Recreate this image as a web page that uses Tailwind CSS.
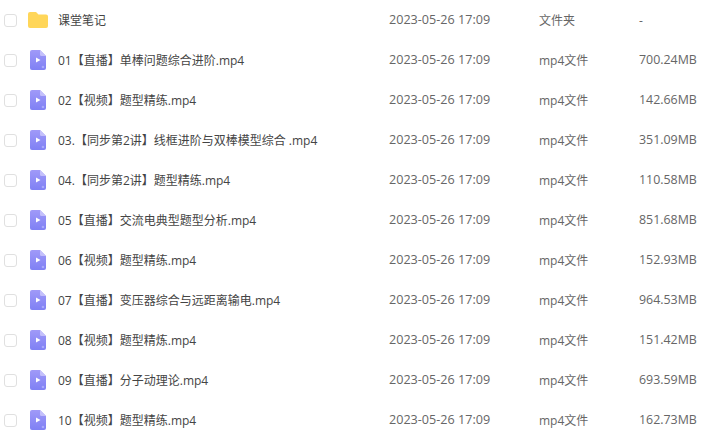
<!DOCTYPE html>
<html><head><meta charset="utf-8"><script src="https://cdn.jsdelivr.net/npm/@tailwindcss/browser@4"></script></head>
<body class="bg-white overflow-hidden font-['Open_Sans','Noto_Sans_CJK_SC',sans-serif] text-xs">
<svg class="absolute w-0 h-0" width="0" height="0"><defs><linearGradient id="g" x1="0" y1="0" x2="0" y2="1"><stop offset="0" stop-color="#a09af8"/><stop offset="1" stop-color="#7f80f4"/></linearGradient></defs></svg>
<div class="w-[712px] h-[436px] overflow-hidden">
<div class="flex items-center h-10 text-[#666]"><span class="ml-1 w-[13px] h-[13px] rounded-[3px] border border-[#e0e0e0] bg-white shrink-0"></span>
<svg class="ml-[11px] w-5 h-4 shrink-0" viewBox="0 0 20 16"><path d="M0 2a2 2 0 0 1 2-2h5c1 0 1.500.4 2 1l1.500 1.500H18a2 2 0 0 1 2 2V14a2 2 0 0 1-2 2H2a2 2 0 0 1-2-2z" fill="#ffd659"/></svg>
<span class="ml-[10px] w-[331px] text-[#444] pt-px">课堂笔记</span><span class="w-[150px] text-[12.6px] pt-px">2023-05-26 17:09</span><span class="w-[100px] pt-px">文件夹</span><span class="pt-px">-</span></div>
<div class="flex items-center h-10 text-[#666]"><span class="ml-1 w-[13px] h-[13px] rounded-[3px] border border-[#e0e0e0] bg-white shrink-0"></span>
<svg class="ml-[13px] w-4 h-5 shrink-0" viewBox="0 0 16 20"><path d="M2 0h8l6 6v12a2 2 0 0 1-2 2H2a2 2 0 0 1-2-2V2a2 2 0 0 1 2-2z" fill="url(#g)"/><path d="M10 0l6 6h-4.500A1.500 1.500 0 0 1 10 4.500z" fill="#c4c0fb"/><circle cx="13" cy="17" r="1.300" fill="#a9a9fa"/><path d="M6 7.500l4.500 2.500-4.500 2.500z" fill="#fff"/></svg>
<span class="ml-3 w-[331px] text-[#444] pt-px">01【直播】单棒问题综合进阶.mp4</span><span class="w-[150px] text-[12.6px] pt-px">2023-05-26 17:09</span><span class="w-[100px] pt-px">mp4文件</span><span class="text-[12.4px] pt-px">700.24MB</span></div>
<div class="flex items-center h-10 text-[#666]"><span class="ml-1 w-[13px] h-[13px] rounded-[3px] border border-[#e0e0e0] bg-white shrink-0"></span>
<svg class="ml-[13px] w-4 h-5 shrink-0" viewBox="0 0 16 20"><path d="M2 0h8l6 6v12a2 2 0 0 1-2 2H2a2 2 0 0 1-2-2V2a2 2 0 0 1 2-2z" fill="url(#g)"/><path d="M10 0l6 6h-4.500A1.500 1.500 0 0 1 10 4.500z" fill="#c4c0fb"/><circle cx="13" cy="17" r="1.300" fill="#a9a9fa"/><path d="M6 7.500l4.500 2.500-4.500 2.500z" fill="#fff"/></svg>
<span class="ml-3 w-[331px] text-[#444] pt-px">02【视频】题型精练.mp4</span><span class="w-[150px] text-[12.6px] pt-px">2023-05-26 17:09</span><span class="w-[100px] pt-px">mp4文件</span><span class="text-[12.4px] pt-px">142.66MB</span></div>
<div class="flex items-center h-10 text-[#666]"><span class="ml-1 w-[13px] h-[13px] rounded-[3px] border border-[#e0e0e0] bg-white shrink-0"></span>
<svg class="ml-[13px] w-4 h-5 shrink-0" viewBox="0 0 16 20"><path d="M2 0h8l6 6v12a2 2 0 0 1-2 2H2a2 2 0 0 1-2-2V2a2 2 0 0 1 2-2z" fill="url(#g)"/><path d="M10 0l6 6h-4.500A1.500 1.500 0 0 1 10 4.500z" fill="#c4c0fb"/><circle cx="13" cy="17" r="1.300" fill="#a9a9fa"/><path d="M6 7.500l4.500 2.500-4.500 2.500z" fill="#fff"/></svg>
<span class="ml-3 w-[331px] text-[#444] pt-px">03.【同步第2讲】线框进阶与双棒模型综合 .mp4</span><span class="w-[150px] text-[12.6px] pt-px">2023-05-26 17:09</span><span class="w-[100px] pt-px">mp4文件</span><span class="text-[12.4px] pt-px">351.09MB</span></div>
<div class="flex items-center h-10 text-[#666]"><span class="ml-1 w-[13px] h-[13px] rounded-[3px] border border-[#e0e0e0] bg-white shrink-0"></span>
<svg class="ml-[13px] w-4 h-5 shrink-0" viewBox="0 0 16 20"><path d="M2 0h8l6 6v12a2 2 0 0 1-2 2H2a2 2 0 0 1-2-2V2a2 2 0 0 1 2-2z" fill="url(#g)"/><path d="M10 0l6 6h-4.500A1.500 1.500 0 0 1 10 4.500z" fill="#c4c0fb"/><circle cx="13" cy="17" r="1.300" fill="#a9a9fa"/><path d="M6 7.500l4.500 2.500-4.500 2.500z" fill="#fff"/></svg>
<span class="ml-3 w-[331px] text-[#444] pt-px">04.【同步第2讲】题型精练.mp4</span><span class="w-[150px] text-[12.6px] pt-px">2023-05-26 17:09</span><span class="w-[100px] pt-px">mp4文件</span><span class="text-[12.4px] pt-px">110.58MB</span></div>
<div class="flex items-center h-10 text-[#666]"><span class="ml-1 w-[13px] h-[13px] rounded-[3px] border border-[#e0e0e0] bg-white shrink-0"></span>
<svg class="ml-[13px] w-4 h-5 shrink-0" viewBox="0 0 16 20"><path d="M2 0h8l6 6v12a2 2 0 0 1-2 2H2a2 2 0 0 1-2-2V2a2 2 0 0 1 2-2z" fill="url(#g)"/><path d="M10 0l6 6h-4.500A1.500 1.500 0 0 1 10 4.500z" fill="#c4c0fb"/><circle cx="13" cy="17" r="1.300" fill="#a9a9fa"/><path d="M6 7.500l4.500 2.500-4.500 2.500z" fill="#fff"/></svg>
<span class="ml-3 w-[331px] text-[#444] pt-px">05【直播】交流电典型题型分析.mp4</span><span class="w-[150px] text-[12.6px] pt-px">2023-05-26 17:09</span><span class="w-[100px] pt-px">mp4文件</span><span class="text-[12.4px] pt-px">851.68MB</span></div>
<div class="flex items-center h-10 text-[#666]"><span class="ml-1 w-[13px] h-[13px] rounded-[3px] border border-[#e0e0e0] bg-white shrink-0"></span>
<svg class="ml-[13px] w-4 h-5 shrink-0" viewBox="0 0 16 20"><path d="M2 0h8l6 6v12a2 2 0 0 1-2 2H2a2 2 0 0 1-2-2V2a2 2 0 0 1 2-2z" fill="url(#g)"/><path d="M10 0l6 6h-4.500A1.500 1.500 0 0 1 10 4.500z" fill="#c4c0fb"/><circle cx="13" cy="17" r="1.300" fill="#a9a9fa"/><path d="M6 7.500l4.500 2.500-4.500 2.500z" fill="#fff"/></svg>
<span class="ml-3 w-[331px] text-[#444] pt-px">06【视频】题型精练.mp4</span><span class="w-[150px] text-[12.6px] pt-px">2023-05-26 17:09</span><span class="w-[100px] pt-px">mp4文件</span><span class="text-[12.4px] pt-px">152.93MB</span></div>
<div class="flex items-center h-10 text-[#666]"><span class="ml-1 w-[13px] h-[13px] rounded-[3px] border border-[#e0e0e0] bg-white shrink-0"></span>
<svg class="ml-[13px] w-4 h-5 shrink-0" viewBox="0 0 16 20"><path d="M2 0h8l6 6v12a2 2 0 0 1-2 2H2a2 2 0 0 1-2-2V2a2 2 0 0 1 2-2z" fill="url(#g)"/><path d="M10 0l6 6h-4.500A1.500 1.500 0 0 1 10 4.500z" fill="#c4c0fb"/><circle cx="13" cy="17" r="1.300" fill="#a9a9fa"/><path d="M6 7.500l4.500 2.500-4.500 2.500z" fill="#fff"/></svg>
<span class="ml-3 w-[331px] text-[#444] pt-px">07【直播】变压器综合与远距离输电.mp4</span><span class="w-[150px] text-[12.6px] pt-px">2023-05-26 17:09</span><span class="w-[100px] pt-px">mp4文件</span><span class="text-[12.4px] pt-px">964.53MB</span></div>
<div class="flex items-center h-10 text-[#666]"><span class="ml-1 w-[13px] h-[13px] rounded-[3px] border border-[#e0e0e0] bg-white shrink-0"></span>
<svg class="ml-[13px] w-4 h-5 shrink-0" viewBox="0 0 16 20"><path d="M2 0h8l6 6v12a2 2 0 0 1-2 2H2a2 2 0 0 1-2-2V2a2 2 0 0 1 2-2z" fill="url(#g)"/><path d="M10 0l6 6h-4.500A1.500 1.500 0 0 1 10 4.500z" fill="#c4c0fb"/><circle cx="13" cy="17" r="1.300" fill="#a9a9fa"/><path d="M6 7.500l4.500 2.500-4.500 2.500z" fill="#fff"/></svg>
<span class="ml-3 w-[331px] text-[#444] pt-px">08【视频】题型精炼.mp4</span><span class="w-[150px] text-[12.6px] pt-px">2023-05-26 17:09</span><span class="w-[100px] pt-px">mp4文件</span><span class="text-[12.4px] pt-px">151.42MB</span></div>
<div class="flex items-center h-10 text-[#666]"><span class="ml-1 w-[13px] h-[13px] rounded-[3px] border border-[#e0e0e0] bg-white shrink-0"></span>
<svg class="ml-[13px] w-4 h-5 shrink-0" viewBox="0 0 16 20"><path d="M2 0h8l6 6v12a2 2 0 0 1-2 2H2a2 2 0 0 1-2-2V2a2 2 0 0 1 2-2z" fill="url(#g)"/><path d="M10 0l6 6h-4.500A1.500 1.500 0 0 1 10 4.500z" fill="#c4c0fb"/><circle cx="13" cy="17" r="1.300" fill="#a9a9fa"/><path d="M6 7.500l4.500 2.500-4.500 2.500z" fill="#fff"/></svg>
<span class="ml-3 w-[331px] text-[#444] pt-px">09【直播】分子动理论.mp4</span><span class="w-[150px] text-[12.6px] pt-px">2023-05-26 17:09</span><span class="w-[100px] pt-px">mp4文件</span><span class="text-[12.4px] pt-px">693.59MB</span></div>
<div class="flex items-center h-10 text-[#666]"><span class="ml-1 w-[13px] h-[13px] rounded-[3px] border border-[#e0e0e0] bg-white shrink-0"></span>
<svg class="ml-[13px] w-4 h-5 shrink-0" viewBox="0 0 16 20"><path d="M2 0h8l6 6v12a2 2 0 0 1-2 2H2a2 2 0 0 1-2-2V2a2 2 0 0 1 2-2z" fill="url(#g)"/><path d="M10 0l6 6h-4.500A1.500 1.500 0 0 1 10 4.500z" fill="#c4c0fb"/><circle cx="13" cy="17" r="1.300" fill="#a9a9fa"/><path d="M6 7.500l4.500 2.500-4.500 2.500z" fill="#fff"/></svg>
<span class="ml-3 w-[331px] text-[#444] pt-px">10【视频】题型精练.mp4</span><span class="w-[150px] text-[12.6px] pt-px">2023-05-26 17:09</span><span class="w-[100px] pt-px">mp4文件</span><span class="text-[12.4px] pt-px">162.73MB</span></div>
</div>
</body></html>
